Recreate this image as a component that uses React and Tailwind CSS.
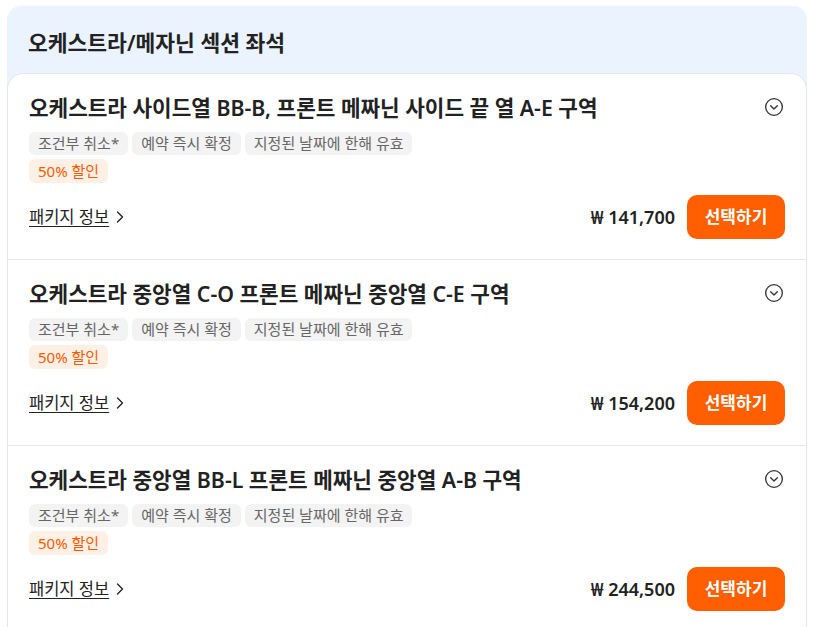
import { ChevronRight } from 'lucide-react';

const items = [
  { title: '오케스트라 사이드열 BB-B, 프론트 메짜닌 사이드 끝 열 A-E 구역', price: '141,700' },
  { title: '오케스트라 중앙열 C-O 프론트 메짜닌 중앙열 C-E 구역', price: '154,200' },
  { title: '오케스트라 중앙열 BB-L 프론트 메짜닌 중앙열 A-B 구역', price: '244,500' },
];

const tags = ['조건부 취소*', '예약 즉시 확정', '지정된 날짜에 한해 유효'];

const CircleChevron = () => (
  <svg className="w-[20px] h-[20px] text-[#333]" viewBox="0 0 24 24" fill="none" stroke="currentColor" strokeWidth={1.6} strokeLinecap="round" strokeLinejoin="round">
    <circle cx="12" cy="12" r="10" />
    <path d="M8 10.5l4 4 4-4" />
  </svg>
);

const Item = ({ title, price, last }) => (
  <div className={`px-[21px] pt-[20px] pb-[20px] ${last ? '' : 'border-b border-[#e6e6e6]'}`}>
    <div className="flex items-start justify-between">
      <h3 className="text-[21.3px] font-semibold leading-[28px] text-[#222]">{title}</h3>
      <div className="pt-[3px] pr-[1px]"><CircleChevron /></div>
    </div>
    <div className="mt-[10px] flex gap-[4px]">
      {tags.map(t => (
        <span key={t} className="px-[9px] h-[23px] leading-[23px] rounded-[6px] bg-[#f3f3f3] text-[15px] text-[#666]">{t}</span>
      ))}
    </div>
    <div className="mt-[4px] flex">
      <span className="px-[9px] h-[24px] leading-[24px] rounded-[6px] bg-[#fff0e5] text-[15px] text-[#ff5a00]">50% 할인</span>
    </div>
    <div className="mt-[12px] flex items-center justify-between h-[44px]">
      <a className="flex items-center text-[16.5px] text-[#222]">
        <span className="underline underline-offset-[3px]">패키지 정보</span>
        <ChevronRight className="w-[20px] h-[20px] ml-[1px]" strokeWidth={1.6} />
      </a>
      <div className="flex items-center gap-[12px]">
        <span className="text-[18px] font-semibold text-[#222]">₩ {price}</span>
        <button className="w-[98px] h-[44px] rounded-[10px] bg-[#ff5f00] text-white text-[17px] font-bold">선택하기</button>
      </div>
    </div>
  </div>
);

export default function App() {
  return (
    <div className="pt-[6px] px-[7px] bg-white min-h-[627px]" style={{ fontFamily: '"Noto Sans", "Noto Sans CJK KR", sans-serif' }}>
      <div className="rounded-t-[14px] bg-[#ebf3fe]">
        <div className="h-[67px] flex items-center px-[21px] pt-[9px] pb-[2px]">
          <h2 className="text-[21.5px] font-semibold text-[#222]">오케스트라/메자닌 섹션 좌석</h2>
        </div>
        <div className="rounded-t-[16px] bg-white border border-[#e3e6ea] border-b-0">
          {items.map((it, i) => (
            <Item key={i} {...it} last={i === items.length - 1} />
          ))}
        </div>
      </div>
    </div>
  );
}
